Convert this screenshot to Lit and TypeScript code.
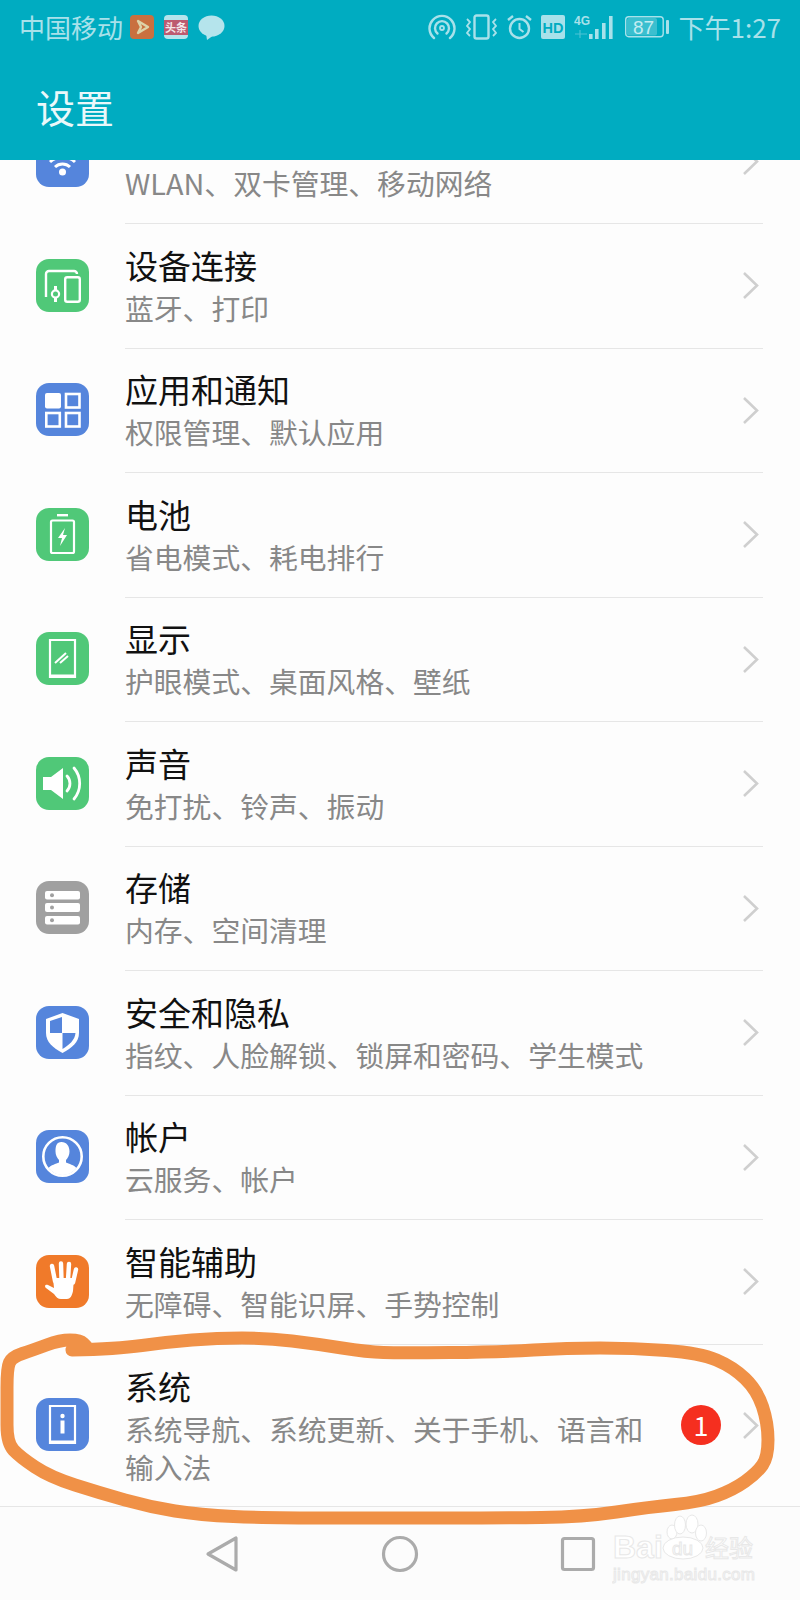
import { LitElement, html, css, svg } from "lit";
import { customElement } from "lit/decorators.js";

const GREEN = "#50c878";
const BLUE = "#5585dc";
const GRAY = "#a0a0a0";
const ORANGE = "#f07a2a";

const icons: Record<string, unknown> = {
  wifi: svg`<path d="M14 28a18 18 0 0 1 25 0M19 33a11 11 0 0 1 15 0" fill="none" stroke="#fff" stroke-width="3"/><circle cx="26.5" cy="38" r="3.5" fill="#fff"/>`,
  devices: svg`<path d="M10 38V15a3 3 0 0 1 3-3h25a3 3 0 0 1 3 3" fill="none" stroke="#fff" stroke-width="2.4"/><rect x="29.2" y="18.2" width="14.6" height="24.6" rx="2" fill="none" stroke="#fff" stroke-width="2.4"/><circle cx="19.5" cy="35" r="3.6" fill="none" stroke="#fff" stroke-width="2.2"/><path d="M19.5 27v4M19.5 39v4" stroke="#fff" stroke-width="3"/>`,
  apps: svg`<rect x="9" y="10" width="16" height="15.5" rx="2" fill="#fff"/><rect x="30" y="11" width="13.5" height="13.5" fill="none" stroke="#fff" stroke-width="2.6"/><rect x="10.3" y="30" width="13.5" height="13.5" fill="none" stroke="#fff" stroke-width="2.6"/><rect x="30" y="30" width="13.5" height="13.5" fill="none" stroke="#fff" stroke-width="2.6"/>`,
  battery: svg`<rect x="21" y="6" width="11" height="2.4" fill="#fff"/><rect x="15" y="12.5" width="23" height="32.5" rx="1.5" fill="none" stroke="#fff" stroke-width="2.2"/><path d="M29 20l-7 10h4l-2 8 7-11h-4z" fill="#fff"/>`,
  display: svg`<path d="M14 8h25v37H14z" fill="none" stroke="#fff" stroke-width="2.2"/><rect x="13" y="42.5" width="27" height="3.5" fill="#fff"/><path d="M19 31l11-10M24 31l8-7" stroke="#fff" stroke-width="2" fill="none"/>`,
  sound: svg`<path d="M7 20h8l12-9v31l-12-9H7z" fill="#fff"/><path d="M31 19a11 11 0 0 1 0 15" fill="none" stroke="#fff" stroke-width="2.8" stroke-linecap="round"/><path d="M38 11a24 24 0 0 1 0 31" fill="none" stroke="#fff" stroke-width="2.8" stroke-linecap="round"/>`,
  storage: svg`<rect x="9" y="10" width="35" height="8.5" rx="2" fill="#fff"/><rect x="9" y="22" width="35" height="9" rx="2" fill="#fff"/><rect x="9" y="35" width="35" height="8.5" rx="2" fill="#fff"/><circle cx="16" cy="14.2" r="2" fill="${GRAY}"/><circle cx="16" cy="26.5" r="2" fill="${GRAY}"/><circle cx="16" cy="39.2" r="2" fill="${GRAY}"/>`,
  shield: svg`<path d="M26.5 7L43 13V27C43 36 36 42 26.5 47C17 42 10 36 10 27V13z" fill="#fff"/><path d="M26 11L14 15V27H26z" fill="${BLUE}"/><path d="M26.5 27H39.5C39 34 33 39 26.5 43z" fill="${BLUE}"/>`,
  account: svg`<circle cx="26.5" cy="26.5" r="19.2" fill="none" stroke="#fff" stroke-width="2.6"/><path d="M25.5 12c5 0 8 4 8 9.5 0 3.5-1.5 6.5-3.5 8.5v2.5c3 1.5 8 2.5 10.5 5.5a17.5 17.5 0 0 1-28 0c2.500-3 7.500-4 10.500-5.500V30c-2-2-3.500-5-3.500-8.500 0-5.500 1-9.500 6-9.500z" fill="#fff"/>`,
  hand: svg`<path d="M16 11l3 15M25 8.500l.5 16M33 9l-1 16M40 14.500l-3 13" stroke="#fff" stroke-width="4.4" stroke-linecap="round" fill="none"/><path d="M17 23h21l-1 13c-1 5-3 8-6 8h-6c-3 0-5-2-7-5l-8-6c-2-2-.5-4 2-3l6 3z" fill="#fff"/>`,
  system: svg`<path d="M14 8h25v37H14z" fill="none" stroke="#fff" stroke-width="2.2"/><rect x="13" y="42.5" width="27" height="3.5" fill="#fff"/><circle cx="26.5" cy="18" r="2.2" fill="#fff"/><rect x="24.5" y="22.5" width="4" height="13" fill="#fff"/>`,
};

interface Row { icon: string; color: string; title: string; sub: string; }

const rows: Row[] = [
  { icon: "wifi", color: BLUE, title: "", sub: "WLAN、双卡管理、移动网络" },
  { icon: "devices", color: GREEN, title: "设备连接", sub: "蓝牙、打印" },
  { icon: "apps", color: BLUE, title: "应用和通知", sub: "权限管理、默认应用" },
  { icon: "battery", color: GREEN, title: "电池", sub: "省电模式、耗电排行" },
  { icon: "display", color: GREEN, title: "显示", sub: "护眼模式、桌面风格、壁纸" },
  { icon: "sound", color: GREEN, title: "声音", sub: "免打扰、铃声、振动" },
  { icon: "storage", color: GRAY, title: "存储", sub: "内存、空间清理" },
  { icon: "shield", color: BLUE, title: "安全和隐私", sub: "指纹、人脸解锁、锁屏和密码、学生模式" },
  { icon: "account", color: BLUE, title: "帐户", sub: "云服务、帐户" },
  { icon: "hand", color: ORANGE, title: "智能辅助", sub: "无障碍、智能识屏、手势控制" },
];

const scribble: [number, number][] = [
  [72, 1350], [117, 1349], [167, 1342], [217, 1338], [267, 1338], [317, 1344], [367, 1352], [400, 1353],
  [500, 1352], [567, 1348], [633, 1348], [700, 1353], [733, 1367], [757, 1390], [768, 1423], [768, 1457],
  [757, 1473], [733, 1490], [700, 1502], [650, 1507], [583, 1517], [500, 1518], [400, 1518], [267, 1518],
  [200, 1515], [150, 1507], [100, 1493], [50, 1477], [20, 1457], [7, 1443], [7, 1407], [7, 1368], [12, 1357], [33, 1350],
  [60, 1340], [80, 1340], [86, 1346],
];

function smooth(p: [number, number][]): string {
  let d = `M${p[0][0]} ${p[0][1]}`;
  for (let i = 1; i < p.length - 1; i++) {
    const mx = (p[i][0] + p[i + 1][0]) / 2;
    const my = (p[i][1] + p[i + 1][1]) / 2;
    d += `Q${p[i][0]} ${p[i][1]} ${mx} ${my}`;
  }
  const l = p[p.length - 1];
  return d + `L${l[0]} ${l[1]}`;
}

@customElement("app-root")
export class AppRoot extends LitElement {
  static styles = css`
    :host {
      display: block;
      position: relative;
      width: 800px;
      height: 1600px;
      overflow: hidden;
      background: #fdfdfd;
      font-family: "Noto Sans CJK SC", "Noto Sans", sans-serif;
    }
    .header {
      position: relative;
      z-index: 2;
      height: 160px;
      background: #00acc1;
    }
    .status {
      display: flex;
      align-items: center;
      height: 54px;
      padding: 0 19px 0 19px;
      color: #a8e1ea;
      font-size: 26px;
      line-height: 54px;
    }
    .status svg { display: block; flex: none; }
    .carrier { margin-right: 7px; }
    .left-icons { display: flex; gap: 10px; align-items: center; }
    .right-icons { display: flex; align-items: center; margin-left: auto; gap: 9px; }
    .sig { margin-right: 2px; }
    .title {
      color: #eaf8fa;
      font-size: 39px;
      line-height: 104px;
      height: 106px;
      padding-left: 36px;
    }
    .list { margin-top: -60.5px; }
    .row {
      display: flex;
      align-items: center;
      height: 124.5px;
      padding-left: 36px;
      box-sizing: border-box;
    }
    .row.tall { height: 161.5px; }
    .icon {
      flex: none;
      width: 53px;
      height: 53px;
      border-radius: 13px;
      margin-right: 36px;
      margin-bottom: 2px;
    }
    .icon svg { display: block; }
    .body {
      flex: 1;
      align-self: stretch;
      display: flex;
      align-items: center;
      margin-right: 37px;
      border-bottom: 1px solid #e6e6e6;
    }
    .row.tall .body { border-bottom: none; }
    .text { flex: 1; min-width: 0; padding-bottom: 3px; }
    .t {
      color: #111;
      font-size: 33px;
      line-height: 47px;
      min-height: 47px;
    }
    .s {
      color: #888;
      font-size: 28.8px;
      line-height: 38px;
    }
    .row.tall .text { padding-bottom: 2px; }
    .row.tall .s { max-width: 530px; }
    .badge {
      flex: none;
      width: 40px;
      height: 40px;
      border-radius: 50%;
      background: #f52f1f;
      color: #fff;
      font-size: 27px;
      line-height: 40px;
      text-align: center;
      margin-right: 21px;
    }
    .chev { flex: none; display: block; margin-right: 4px; }
    .nav {
      display: flex;
      justify-content: center;
      align-items: center;
      height: 95px;
      box-sizing: border-box;
      border-top: 1px solid #e6e6e6;
      background: #fcfcfc;
    }
    .nav span { width: 178px; display: flex; justify-content: center; }
    .nav svg { display: block; }
    .scribble {
      position: absolute;
      left: 0;
      top: 0;
      z-index: 3;
      pointer-events: none;
    }
    .mark {
      position: absolute;
      left: 612px;
      top: 1512px;
      width: 150px;
      height: 76px;
      z-index: 4;
      pointer-events: none;
    }
    .mark svg { display: block; }
  `;

  private chevron() {
    return html`<svg class="chev" width="17" height="29" viewBox="0 0 17 29"><path d="M2 2l13 12.5L2 27" fill="none" stroke="#cfcfcf" stroke-width="2.6"/></svg>`;
  }

  private icon(name: string, color: string) {
    return html`<div class="icon" style="background:${color}"><svg width="53" height="53" viewBox="0 0 53 53">${icons[name]}</svg></div>`;
  }

  render() {
    return html`
      <div class="header">
        <div class="status">
          <span class="carrier">中国移动</span>
          <div class="left-icons">
            <svg width="24" height="24" viewBox="0 0 24 24"><rect width="24" height="24" rx="4" fill="#c9703f"/><path d="M8 6l10 6-10 6 3-6z" fill="none" stroke="#ddd3a8" stroke-width="2.4" stroke-linejoin="round"/></svg>
            <svg width="24" height="24" viewBox="0 0 24 24"><rect width="24" height="24" rx="4" fill="#b5e4ec"/><rect y="5" width="24" height="15" fill="#bd5a70"/><text x="12" y="17" font-size="11" text-anchor="middle" fill="#f3e6ea" font-family="Noto Sans CJK SC" font-weight="700">头条</text></svg>
            <svg width="27" height="25" viewBox="0 0 27 25"><ellipse cx="13.5" cy="11" rx="13" ry="10.5" fill="#b5e4ec"/><path d="M8 18l1 7 7-5z" fill="#b5e4ec"/></svg>
          </div>
          <div class="right-icons">
            <svg width="28" height="26" viewBox="0 0 28 26"><g fill="none" stroke="#a8e1ea" stroke-width="2.4" stroke-linecap="round"><path d="M6 24a12.5 12.5 0 1 1 16 0"/><path d="M9.5 19.5a7 7 0 1 1 9 0"/></g><circle cx="14" cy="14" r="2" fill="none" stroke="#a8e1ea" stroke-width="1.8"/></svg>
            <svg width="33" height="26" viewBox="0 0 33 26"><rect x="9.5" y="1.5" width="14" height="23" rx="2" fill="none" stroke="#a8e1ea" stroke-width="2.4"/><path d="M2 5l3 3-3 4 3 3-3 4 3 3M31 5l-3 3 3 4-3 3 3 4-3 3" fill="none" stroke="#a8e1ea" stroke-width="1.8"/></svg>
            <svg width="25" height="26" viewBox="0 0 25 26"><circle cx="12.5" cy="14.5" r="9.5" fill="none" stroke="#a8e1ea" stroke-width="2.4"/><path d="M12.5 9v6l4 3" fill="none" stroke="#a8e1ea" stroke-width="2"/><path d="M1 6l5-4M24 6l-5-4" stroke="#a8e1ea" stroke-width="2.4"/></svg>
            <svg width="24" height="24" viewBox="0 0 24 24"><rect width="24" height="24" rx="2" fill="#a8e1ea"/><text x="12" y="17.5" font-size="14.5" font-weight="700" text-anchor="middle" fill="#00acc1" font-family="Liberation Sans">HD</text></svg>
            <svg class="sig" width="40" height="26" viewBox="0 0 40 26"><text x="0" y="11" font-size="12" font-weight="700" fill="#a8e1ea" font-family="Liberation Sans">4G</text><path d="M1 20h12M6 16v8" stroke="#a8e1ea" stroke-opacity=".45" stroke-width="1.2"/><g fill="#a8e1ea"><rect x="15" y="20" width="3.6" height="5"/><rect x="21" y="15" width="3.6" height="10"/><rect x="28" y="9" width="3.6" height="16"/><rect x="35" y="2" width="3.6" height="23"/></g></svg>
            <svg width="44" height="24" viewBox="0 0 44 24"><rect x=".7" y="1.7" width="37.500" height="20" rx="3" fill="none" stroke="#a8e1ea" stroke-width="1.4"/><rect x="2" y="3" width="30" height="17.5" rx="2" fill="#a8e1ea" fill-opacity=".35"/><rect x="41" y="5" width="3" height="14" rx="1" fill="#a8e1ea"/><text x="18.5" y="18.5" font-size="19" text-anchor="middle" fill="#c4ecf1" font-family="Liberation Sans">87</text></svg>
            <span>下午1:27</span>
          </div>
        </div>
        <div class="title">设置</div>
      </div>
      <div class="list">
        ${rows.map(
          (r) => html`<div class="row">
            ${this.icon(r.icon, r.color)}
            <div class="body">
              <div class="text"><div class="t">${r.title}</div><div class="s">${r.sub}</div></div>
              ${this.chevron()}
            </div>
          </div>`
        )}
        <div class="row tall">
          ${this.icon("system", BLUE)}
          <div class="body">
            <div class="text"><div class="t">系统</div><div class="s">系统导航、系统更新、关于手机、语言和输入法</div></div>
            <div class="badge">1</div>
            ${this.chevron()}
          </div>
        </div>
      </div>
      <div class="nav">
        <span><svg width="34" height="38" viewBox="0 0 34 38"><path d="M31 3v32L3 19z" fill="none" stroke="#ababab" stroke-width="3.2" stroke-linejoin="round"/></svg></span>
        <span><svg width="38" height="38" viewBox="0 0 38 38"><circle cx="19" cy="19" r="16.5" fill="none" stroke="#ababab" stroke-width="3.2"/></svg></span>
        <span><svg width="36" height="36" viewBox="0 0 36 36"><rect x="2.5" y="2.5" width="31" height="31" rx="2" fill="none" stroke="#ababab" stroke-width="3.2"/></svg></span>
      </div>
      <svg class="scribble" width="800" height="1600" viewBox="0 0 800 1600"><path d=${smooth(scribble)} fill="none" stroke="#f09147" stroke-width="13" stroke-linecap="round" stroke-linejoin="round"/></svg>
      <div class="mark">
        <svg width="150" height="76" viewBox="0 0 150 76">
          <g fill="#fff" stroke="#e8e8e8" stroke-width="1">
            <ellipse cx="60" cy="20" rx="5" ry="7"/><ellipse cx="68" cy="13" rx="5.5" ry="9"/><ellipse cx="80" cy="12" rx="6" ry="9"/><ellipse cx="89" cy="21" rx="5.5" ry="8"/>
            <ellipse cx="71" cy="36" rx="20" ry="11"/>
            <text x="1" y="46" font-size="32" font-weight="700" font-family="Liberation Sans">Bai</text>
            <text x="60" y="43" font-size="19" font-family="Liberation Sans">du</text>
            <text x="93" y="45" font-size="24" font-family="Noto Sans CJK SC">经验</text>
            <text x="1" y="68" font-size="17" font-family="Liberation Sans" textLength="142">jingyan.baidu.com</text>
          </g>
        </svg>
      </div>
    `;
  }
}
